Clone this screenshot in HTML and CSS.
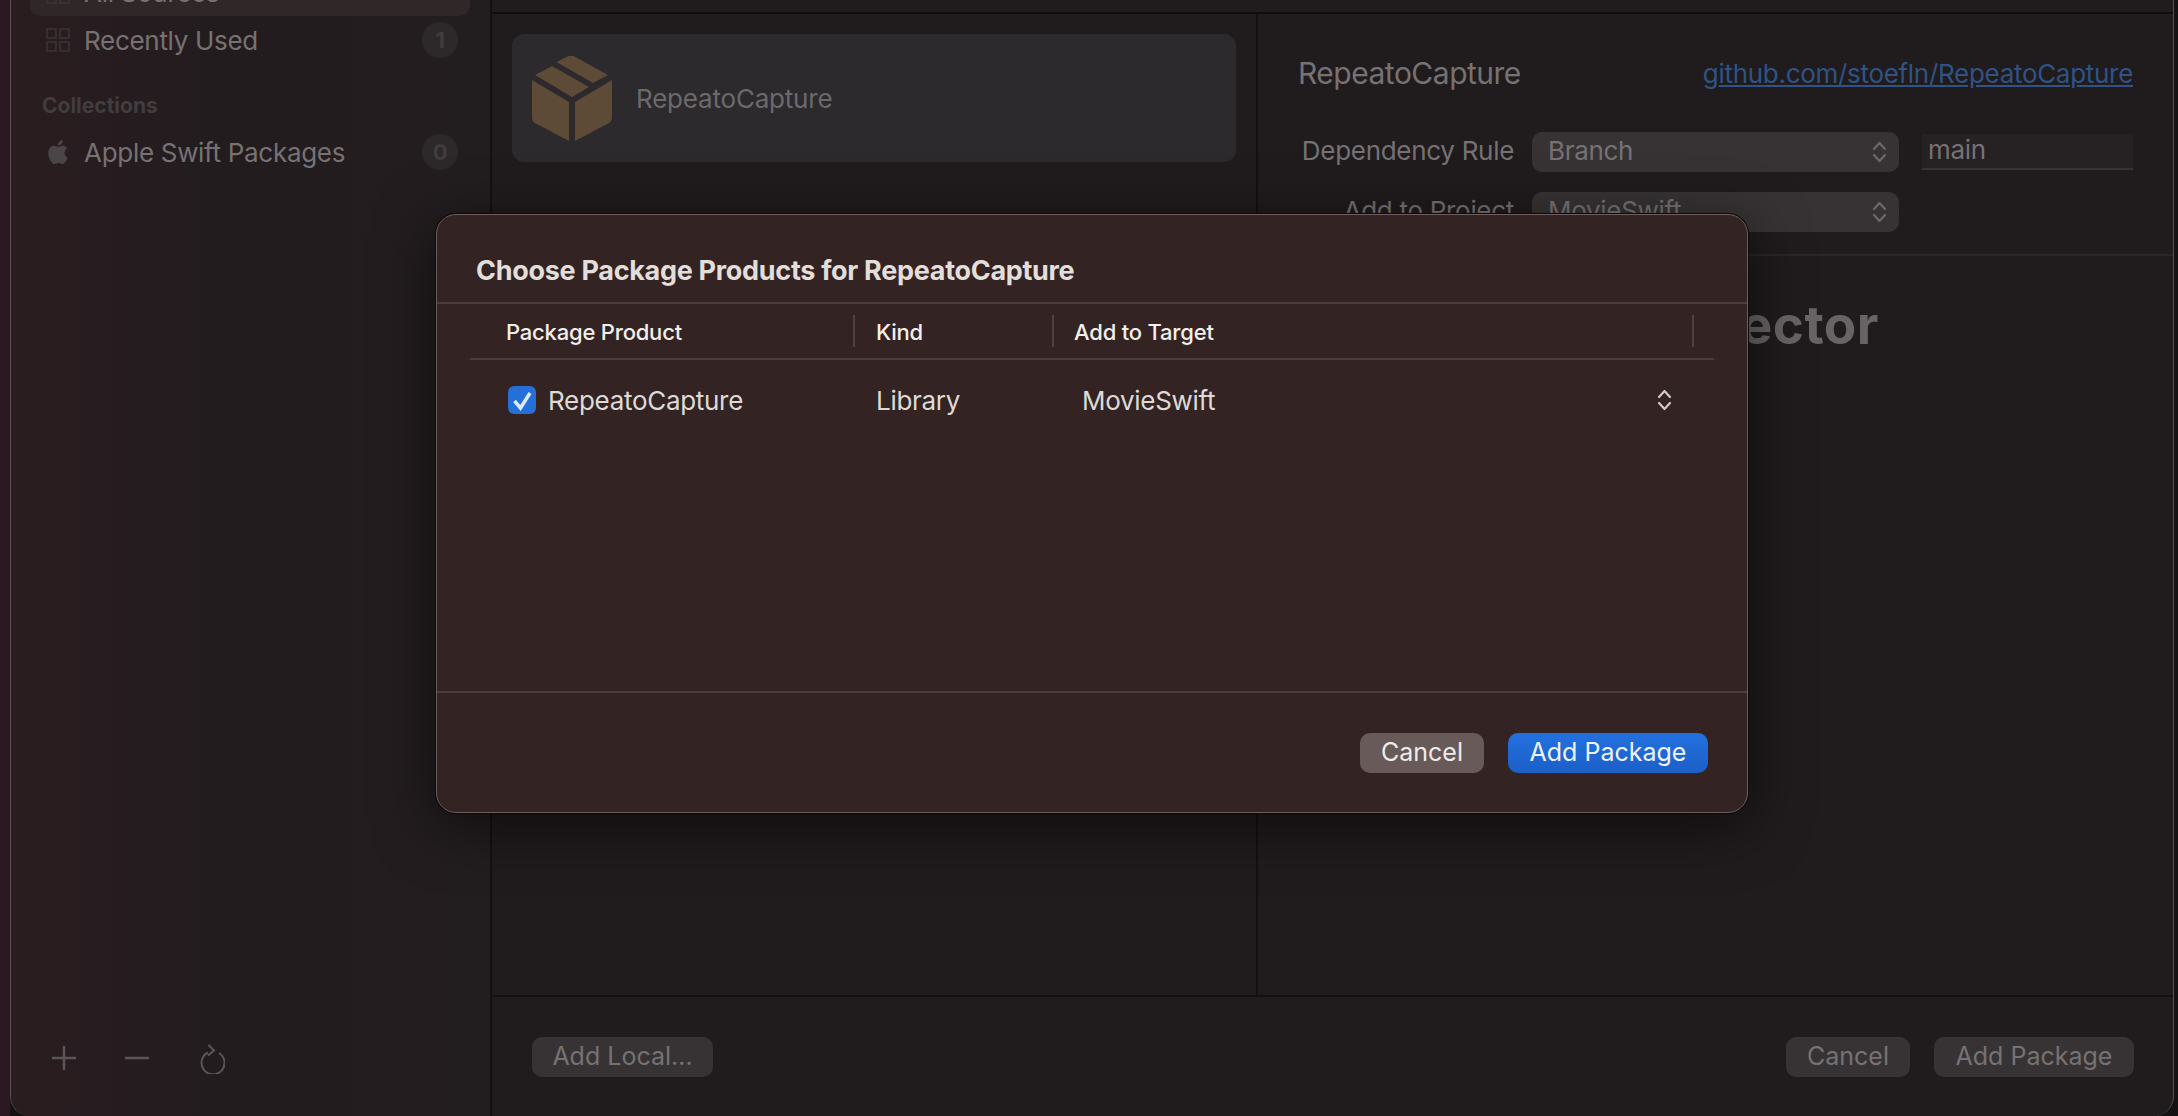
FILE: index.html
```html
<!DOCTYPE html>
<html lang="en">
<head>
  <meta charset="UTF-8" />
  <title>Add Package</title>
  <link rel="stylesheet" href="styles.css">
</head>
<body>
  <div class="window">
    <aside class="sidebar">
      <div class="side-list">
        <div class="side-row selected">
          <svg class="side-icon" viewBox="0 0 24 24"><use href="#grid" /></svg>
          <span class="side-name">All Sources</span>
        </div>
        <div class="side-row">
          <svg class="side-icon" viewBox="0 0 24 24"><use href="#grid" /></svg>
          <span class="side-name">Recently Used</span>
          <span class="badge">1</span>
        </div>
        <div class="side-title">Collections</div>
        <div class="side-row">
          <svg class="side-icon apple" viewBox="0 0 24 24"><path d="M12.152 6.896c-.948 0-2.415-1.078-3.96-1.04-2.04.027-3.91 1.183-4.961 3.014-2.117 3.675-.546 9.103 1.519 12.09 1.013 1.454 2.208 3.09 3.792 3.039 1.52-.065 2.09-.987 3.935-.987 1.831 0 2.35.987 3.96.948 1.637-.026 2.676-1.48 3.676-2.948 1.156-1.688 1.636-3.325 1.662-3.415-.039-.013-3.182-1.221-3.22-4.857-.026-3.04 2.48-4.494 2.597-4.559-1.429-2.09-3.623-2.324-4.39-2.376-2-.156-3.675 1.09-4.61 1.09zM15.53 3.83c.843-1.012 1.4-2.427 1.245-3.83-1.207.052-2.662.805-3.532 1.818-.78.896-1.454 2.338-1.273 3.714 1.338.104 2.715-.688 3.559-1.701" /></svg>
          <span class="side-name">Apple Swift Packages</span>
          <span class="badge">0</span>
        </div>
      </div>
      <div class="side-tools">
        <svg class="tool" width="24" height="24" viewBox="0 0 24 24"><path d="M12 0v24M0 12h24" /></svg>
        <svg class="tool" width="24" height="24" viewBox="0 0 24 24"><path d="M0 12h24" /></svg>
        <svg class="tool refresh" width="26" height="30" viewBox="0 0 26 30"><path d="M9 8.500A11.500 11.500 0 1 0 20 9M9.500 1l5.500 5.500-6 5" /></svg>
      </div>
    </aside>

    <main class="main">
      <div class="topbar"></div>
      <div class="panes">
        <section class="results">
          <div class="package-card">
            <svg class="box-icon" width="80" height="85" viewBox="0 0 80 85">
              <path d="M0 24l37 22v39L3 67q-3-2-3-6zM80 24L43 46v39l34-18q3-2 3-6zM24.500 6l12-6q3.500-1 6 .5L76 19l-15 8zM3 19l17-9 37 21-17 10z" />
            </svg>
            <span class="card-name">RepeatoCapture</span>
          </div>
        </section>
        <section class="inspector">
          <div class="inspector-head">
            <div class="name-row">
              <span class="inspector-name">RepeatoCapture</span>
              <span class="repo-link">github.com/stoefln/RepeatoCapture</span>
            </div>
            <div class="form-row">
              <span class="form-label">Dependency Rule</span>
              <div class="popup"><span class="popup-text">Branch</span><svg class="updown" width="15" height="22" viewBox="0 0 15 22"><use href="#updown" /></svg></div>
              <div class="text-field">main</div>
            </div>
            <div class="form-row">
              <span class="form-label">Add to Project</span>
              <div class="popup"><span class="popup-text">MovieSwift</span><svg class="updown" width="15" height="22" viewBox="0 0 15 22"><use href="#updown" /></svg></div>
            </div>
          </div>
          <div class="inspector-empty">Package Inspector</div>
        </section>
      </div>
      <div class="footer">
        <button class="btn dim">Add Local…</button>
        <div class="footer-right">
          <button class="btn dim cancel">Cancel</button>
          <button class="btn dim add">Add Package</button>
        </div>
      </div>
    </main>
  </div>

  <div class="sheet">
    <h2 class="sheet-title">Choose Package Products for RepeatoCapture</h2>
    <div class="table">
      <div class="table-head">
        <div class="col col-product">Package Product</div>
        <div class="col col-kind">Kind</div>
        <div class="col col-target">Add to Target</div>
      </div>
      <div class="table-row">
        <div class="cell cell-product">
          <svg class="check" width="28" height="28" viewBox="0 0 28 28"><rect width="28" height="28" rx="6" /><path d="M6.500 15l6 7L22 7" /></svg>
          RepeatoCapture
        </div>
        <div class="cell cell-kind">Library</div>
        <div class="cell cell-target">MovieSwift<svg class="updown" width="15" height="22" viewBox="0 0 15 22"><use href="#updown" /></svg></div>
      </div>
    </div>
    <div class="sheet-footer">
      <button class="btn sheet-cancel">Cancel</button>
      <button class="btn primary">Add Package</button>
    </div>
  </div>

  <svg class="defs" width="0" height="0">
    <symbol id="grid" viewBox="0 0 24 24">
      <path fill="none" stroke="currentColor" stroke-width="1.500" d="M1 1h9v9H1zM14 1h9v9h-9zM1 14h9v9H1zM14 14h9v9h-9z" />
    </symbol>
    <symbol id="updown" viewBox="0 0 15 22">
      <path fill="none" stroke="currentColor" stroke-width="2.200" stroke-linecap="round" stroke-linejoin="round" d="M2 8l5.500-6L13 8M2 14l5.500 6 5.500-6" />
    </symbol>
  </svg>
</body>
</html>
```

FILE: styles.css
```css
/* Reset */
* {
  box-sizing: border-box;
}
html, body {
  margin: 0;
  height: 1116px;
  overflow: hidden;
}
body {
  position: relative;
  font-family: Inter, 'Noto Sans', sans-serif;
  font-size: 26px;
  letter-spacing: -0.3px;
  background: linear-gradient(90deg, #2c1822 0, #2c1822 10px, #151213 10px);
}
button {
  font-family: inherit;
}
.defs {
  position: absolute;
}

/* Window behind the sheet */
.window {
  display: flex;
  width: 2164px;
  height: 1116px;
  margin-left: 10px;
  border: 1px solid #565052;
  border-top: none;
  border-bottom: none;
  border-radius: 0 0 20px 20px;
  background: #201b1d;
  overflow: hidden;
}

/* Sidebar */
.sidebar {
  display: flex;
  flex-direction: column;
  justify-content: space-between;
  flex: none;
  width: 481px;
  background: linear-gradient(90deg, #2a1d20 0, #231c1f 200px, #221d1f 100%);
  border-right: 2px solid #131011;
}
.side-list {
  margin-top: -32px;
  padding: 0 20px 0 19px;
  flex: none;
}
.side-row {
  display: flex;
  align-items: center;
  gap: 14px;
  height: 48px;
  padding: 0 12px 0 16px;
  border-radius: 10px;
  color: #767274;
}
.side-row.selected {
  background: #302729;
}
.side-icon {
  flex: none;
  width: 24px;
  height: 24px;
  color: #3b3638;
  fill: #3b3638;
}
.apple {
  fill: #4a4648;
}
.side-name {
  flex: 1;
}
.badge {
  flex: none;
  width: 36px;
  height: 36px;
  border-radius: 50%;
  background: #2d2829;
  color: #413c3e;
  font-size: 22px;
  font-weight: 700;
  line-height: 36px;
  text-align: center;
}
.side-title {
  margin: 26px 0 6px 12px;
  height: 32px;
  line-height: 32px;
  color: #413c3e;
  font-size: 21px;
  font-weight: 700;
  letter-spacing: 0;
}
.side-tools {
  display: flex;
  align-items: center;
  gap: 49px;
  height: 60px;
  margin-bottom: 28px;
  padding-left: 41px;
}
.tool {
  flex: none;
  fill: none;
  stroke: #5a5557;
  stroke-width: 2.5;
}
.refresh {
  margin-left: 1px;
  margin-top: 2px;
  stroke-width: 2;
}

/* Main column */
.main {
  display: flex;
  flex-direction: column;
  flex: 1;
  min-width: 0;
}
.topbar {
  flex: none;
  height: 14px;
  border-bottom: 2px solid #0f0c0d;
}
.panes {
  display: flex;
  flex: 1;
  min-height: 0;
}
.results {
  flex: none;
  width: 766px;
  padding: 20px 20px 0 20px;
  border-right: 2px solid #131011;
}
.package-card {
  display: flex;
  align-items: center;
  gap: 24px;
  height: 128px;
  padding: 0 0 0 20px;
  border-radius: 12px;
  background: #2c2a2c;
  color: #6c696b;
}
.box-icon {
  flex: none;
  fill: #5e4b37;
}
.card-name {
  margin-top: 1px;
  letter-spacing: -0.2px;
}

/* Inspector */
.inspector {
  display: flex;
  flex-direction: column;
  flex: 1;
  min-width: 0;
}
.inspector-head {
  height: 242px;
  padding: 41px 40px 0 40px;
  border-bottom: 2px solid #2b2628;
}
.name-row {
  display: flex;
  justify-content: space-between;
  align-items: center;
  height: 36px;
  margin-bottom: 41px;
  color: #767274;
}
.inspector-name {
  font-size: 30px;
  letter-spacing: -0.5px;
}
.repo-link {
  color: #2f5384;
  text-decoration: underline;
}
.form-row {
  display: flex;
  align-items: center;
  height: 40px;
  margin-bottom: 20px;
}
.form-label {
  flex: none;
  width: 216px;
  text-align: right;
  margin-right: 18px;
  padding-bottom: 3px;
  color: #767274;
}
.popup {
  display: flex;
  align-items: center;
  justify-content: space-between;
  flex: none;
  width: 367px;
  height: 40px;
  padding: 0 12px 0 16px;
  border-radius: 10px;
  background: #373334;
  color: #767274;
}
.popup-text {
  padding-bottom: 3px;
}
.updown {
  flex: none;
  color: #6c686a;
}
.text-field {
  flex: 1;
  height: 36px;
  margin-left: 23px;
  padding-left: 6px;
  line-height: 32px;
  background: #262123;
  border-bottom: 2px solid #383335;
  color: #767274;
}
.inspector-empty {
  margin-top: 37px;
  padding-left: 131px;
  color: #686466;
  font-size: 53px;
  font-weight: 700;
  letter-spacing: 0.5px;
  white-space: nowrap;
}

/* Bottom bar */
.footer {
  display: flex;
  align-items: center;
  justify-content: space-between;
  flex: none;
  height: 121px;
  padding: 0 39px 0 40px;
  border-top: 2px solid #131011;
}
.footer-right {
  display: flex;
  gap: 24px;
}
.btn {
  height: 40px;
  padding: 0 0 2px;
  border: none;
  border-radius: 10px;
  font-size: 25px;
  letter-spacing: 0;
  text-align: center;
}
.dim {
  width: 181px;
  background: #373334;
  color: #767274;
}
.dim.cancel {
  width: 124px;
}
.dim.add {
  width: 200px;
}

/* Sheet */
.sheet {
  position: absolute;
  left: 436px;
  top: 214px;
  display: flex;
  flex-direction: column;
  width: 1312px;
  height: 599px;
  border: 1px solid #6d605e;
  border-radius: 20px;
  background: #332423;
  box-shadow: 0 0 0 1px #0a0808, 0 12px 60px rgba(0, 0, 0, 0.55);
  color: #dedad7;
}
.sheet-title {
  flex: none;
  height: 89px;
  margin: 0;
  padding: 38px 0 0 39px;
  border-bottom: 2px solid #4a3d3b;
  color: #e2dedb;
  font-size: 27px;
  line-height: 36px;
  font-weight: 700;
  letter-spacing: -0.3px;
}
.table {
  flex: 1;
  margin: 0 33px;
}
.table-head {
  display: flex;
  align-items: center;
  height: 56px;
  border-bottom: 2px solid #4a3d3b;
  color: #f3efec;
  font-size: 22px;
  font-weight: 500;
  letter-spacing: -0.2px;
}
.col {
  flex: none;
  height: 32px;
  line-height: 34px;
  border-right: 2px solid #4f4240;
}
.col-product {
  width: 385px;
  padding-left: 36px;
}
.col-kind {
  width: 199px;
  padding-left: 21px;
}
.col-target {
  width: 640px;
  padding-left: 20px;
}
.table-row {
  display: flex;
  align-items: center;
  height: 80px;
}
.cell {
  display: flex;
  align-items: center;
  flex: none;
}
.cell-product {
  width: 406px;
  padding-left: 38px;
  gap: 12px;
}
.check {
  flex: none;
  fill: #2470d8;
  stroke: #dce9fa;
  stroke-width: 3.5;
}
.check rect {
  stroke: none;
}
.check path {
  fill: none;
}
.cell-kind {
  width: 206px;
}
.cell-target {
  justify-content: space-between;
  width: 590px;
}
.cell-target .updown {
  color: #cfcac8;
}
.sheet-footer {
  display: flex;
  justify-content: flex-end;
  gap: 24px;
  flex: none;
  height: 121px;
  padding: 40px 39px 0 0;
  border-top: 2px solid #4a3d3b;
}
.sheet-cancel {
  width: 124px;
  background: #675a58;
  color: #efebe8;
}
.primary {
  width: 200px;
  background: linear-gradient(180deg, #2271e0, #1c5fc8);
  color: #eef3fb;
}
```
